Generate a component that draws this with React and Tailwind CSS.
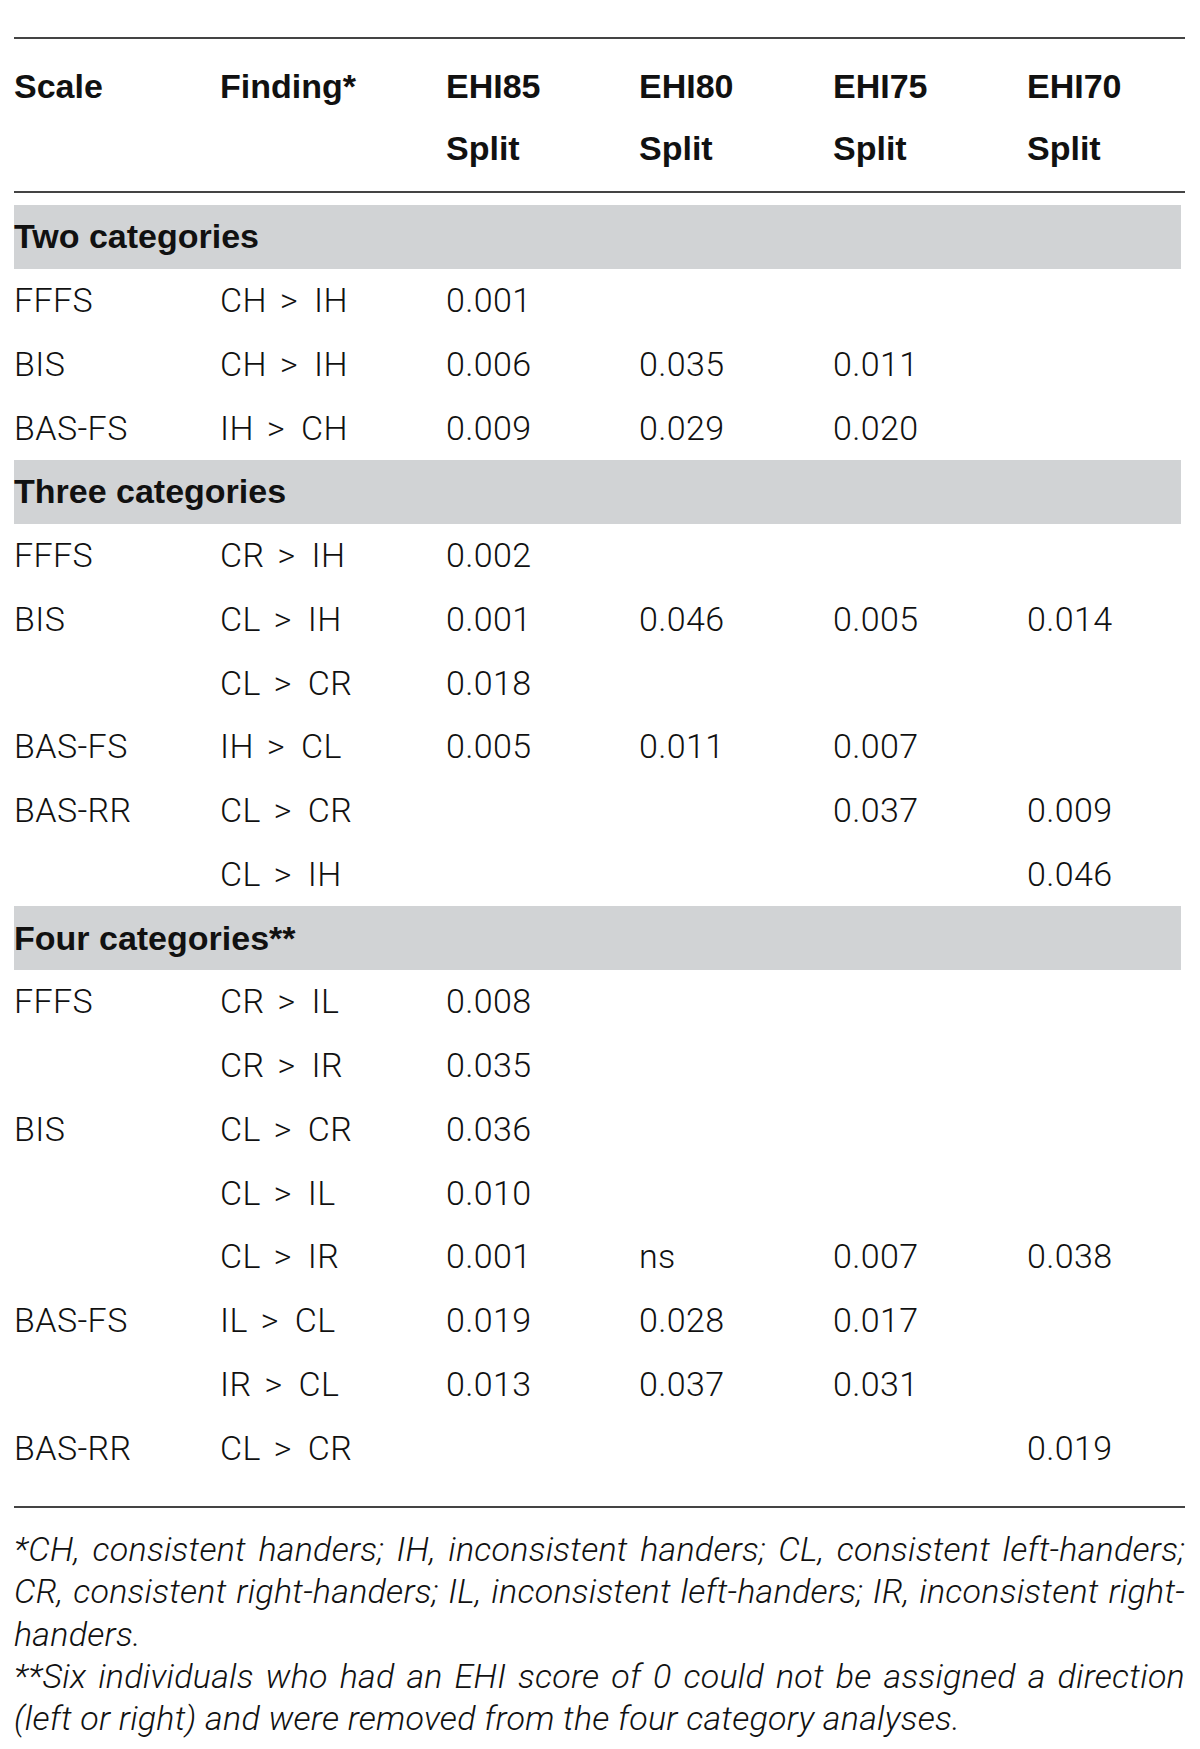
const cols = 'grid grid-cols-[206px_226px_193px_194px_194px_1fr] items-center';

const sections = [
  {
    title: 'Two categories',
    rows: [
      ['FFFS', 'CH > IH', '0.001', '', '', ''],
      ['BIS', 'CH > IH', '0.006', '0.035', '0.011', ''],
      ['BAS-FS', 'IH > CH', '0.009', '0.029', '0.020', ''],
    ],
  },
  {
    title: 'Three categories',
    rows: [
      ['FFFS', 'CR > IH', '0.002', '', '', ''],
      ['BIS', 'CL > IH', '0.001', '0.046', '0.005', '0.014'],
      ['', 'CL > CR', '0.018', '', '', ''],
      ['BAS-FS', 'IH > CL', '0.005', '0.011', '0.007', ''],
      ['BAS-RR', 'CL > CR', '', '', '0.037', '0.009'],
      ['', 'CL > IH', '', '', '', '0.046'],
    ],
  },
  {
    title: 'Four categories**',
    rows: [
      ['FFFS', 'CR > IL', '0.008', '', '', ''],
      ['', 'CR > IR', '0.035', '', '', ''],
      ['BIS', 'CL > CR', '0.036', '', '', ''],
      ['', 'CL > IL', '0.010', '', '', ''],
      ['', 'CL > IR', '0.001', 'ns', '0.007', '0.038'],
      ['BAS-FS', 'IL > CL', '0.019', '0.028', '0.017', ''],
      ['', 'IR > CL', '0.013', '0.037', '0.031', ''],
      ['BAS-RR', 'CL > CR', '', '', '', '0.019'],
    ],
  },
];

const heads = [
  ['Scale', ''],
  ['Finding*', ''],
  ['EHI85', 'Split'],
  ['EHI80', 'Split'],
  ['EHI75', 'Split'],
  ['EHI70', 'Split'],
];

// finding cells use a wider gap round the ">" sign
function Finding({ text }) {
  if (!text.includes('>')) return text;
  const [l, r] = text.split(' > ');
  return (
    <span>
      {l}
      <span className="ml-[13px] mr-[16px]">&gt;</span>
      {r}
    </span>
  );
}

export default function App() {
  return (
    <div className="min-h-[1749px] bg-white text-[#111] pl-[14px] pt-[37px]">
      <div className="w-[1171px]">
        <div className="h-[2px] bg-[#444]" />

        {/* header */}
        <div className="pt-[16px] pb-[12px] font-['Liberation_Sans',Arial,sans-serif] font-bold text-[34px] leading-[62px]">
          <div className={cols}>
            {heads.map(([a, b], i) => (
              <div key={i}>
                <div>{a}</div>
                <div>{b || '\u00a0'}</div>
              </div>
            ))}
          </div>
        </div>
        <div className="h-[2px] bg-[#444]" />

        {/* body */}
        <div className="pt-[12px] pb-[26px] font-['Roboto',Arial,sans-serif] font-light text-[34px] tracking-[0.4px]">
          {sections.map((s) => (
            <div key={s.title}>
              <div className="h-[63.75px] w-[1167px] bg-[#d1d3d5] flex items-center font-['Liberation_Sans',Arial,sans-serif] font-bold text-[34px] tracking-normal">
                {s.title}
              </div>
              {s.rows.map((r, i) => (
                <div key={i} className={`${cols} h-[63.75px]`}>
                  {r.map((c, j) => (
                    <div key={j}>{j === 1 ? <Finding text={c} /> : c}</div>
                  ))}
                </div>
              ))}
            </div>
          ))}
        </div>
        <div className="h-[2px] bg-[#444]" />

        {/* footnotes */}
        <div className="pt-[20px] font-['Roboto',Arial,sans-serif] font-light italic text-[34px] tracking-[0.25px] leading-[42.3px]">
          <div className="text-justify [text-align-last:justify]">
            *CH, consistent handers; IH, inconsistent handers; CL, consistent left-handers;
          </div>
          <div className="text-justify [text-align-last:justify]">
            CR, consistent right-handers; IL, inconsistent left-handers; IR, inconsistent right-
          </div>
          <div>handers.</div>
          <div className="text-justify [text-align-last:justify]">
            **Six individuals who had an EHI score of 0 could not be assigned a direction
          </div>
          <div>(left or right) and were removed from the four category analyses.</div>
        </div>
      </div>
    </div>
  );
}
